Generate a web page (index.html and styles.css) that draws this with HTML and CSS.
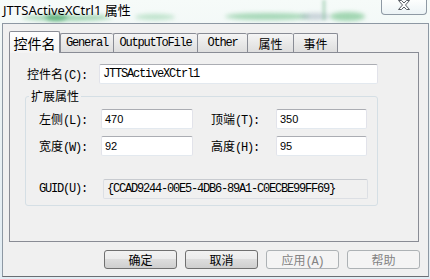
FILE: index.html
```html
<!DOCTYPE html>
<html lang="zh-CN">
  <head>
    <meta charset="UTF-8" />
    <title>JTTSActiveXCtrl1 属性</title>
    <link rel="stylesheet" href="styles.css">
  </head>
  <body>
    <div class="window">
      <div class="glass">
        <span class="blob b1"></span>
        <span class="blob b2"></span>
        <span class="blob b3"></span>
        <span class="blob b4"></span>
        <span class="blob b5"></span>
        <span class="blob b6"></span>
        <span class="stem"></span>
      </div>

      <div class="titlebar">
        <span class="title">JTTSActiveXCtrl1 属性</span>
        <button class="close" title="关闭">
          <svg width="12" height="10" viewBox="0 0 12 10">
            <polygon points="0.5,0.5 3.5,0.5 6,3 8.5,0.5 11.5,0.5 7.5,5 11.5,9.5 8.5,9.5 6,7 3.5,9.5 0.5,9.5 4.5,5"
              fill="#fdfdfd" stroke="#5a5f66" stroke-width="1" stroke-linejoin="round" />
          </svg>
        </button>
      </div>

      <div class="client">
        <div class="tabs">
          <div class="tab active">控件名</div>
          <div class="tab mono">General</div>
          <div class="tab mono">OutputToFile</div>
          <div class="tab mono">Other</div>
          <div class="tab">属性</div>
          <div class="tab">事件</div>
        </div>

        <div class="page">
          <div class="row name-row">
            <label>控件名<span class="mono">(C):</span></label>
            <div class="edit mono">JTTSActiveXCtrl1</div>
          </div>

          <fieldset class="group">
            <legend>扩展属性</legend>
            <div class="grid">
              <label>左侧<span class="mono">(L):</span></label>
              <div class="edit num">470</div>
              <label class="col2">顶端<span class="mono">(T):</span></label>
              <div class="edit num">350</div>

              <label>宽度<span class="mono">(W):</span></label>
              <div class="edit num">92</div>
              <label class="col2">高度<span class="mono">(H):</span></label>
              <div class="edit num">95</div>
            </div>

            <div class="row guid-row">
              <label class="mono">GUID(U):</label>
              <div class="edit mono readonly">{CCAD9244-00E5-4DB6-89A1-C0ECBE99FF69}</div>
            </div>
          </fieldset>
        </div>

        <div class="buttons">
          <button class="btn">确定</button>
          <button class="btn">取消</button>
          <button class="btn" disabled>应用<span class="mono">(A)</span></button>
          <button class="btn" disabled>帮助</button>
        </div>
      </div>
    </div>
  </body>
</html>
```

FILE: styles.css
```css
* {
  box-sizing: border-box;
}
body {
  margin: 0;
  width: 430px;
  height: 279px;
  overflow: hidden;
  font-family: "Noto Sans CJK SC", sans-serif;
  font-size: 12px;
  color: #000;
}
.window {
  position: relative;
  width: 430px;
  height: 279px;
  background: linear-gradient(#f6fbf9, #ecf3f4 30%, #e2ecf3);
  display: flex;
  flex-direction: column;
}

/* blurred desktop behind the glass title bar */
.glass {
  position: absolute;
  left: 0;
  top: 0;
  width: 430px;
  height: 23px;
  overflow: hidden;
}
.blob {
  position: absolute;
  border-radius: 50%;
  background: rgba(70, 175, 105, 0.45);
  filter: blur(2px);
}
.b1 { left: 22px; top: 14px; width: 90px; height: 7px; }
.b2 { left: 45px; top: 12px; width: 22px; height: 9px; background: rgba(40, 150, 80, 0.55); }
.b3 { left: 135px; top: 14px; width: 40px; height: 6px; background: rgba(90, 185, 120, 0.35); }
.b4 { left: 225px; top: 13px; width: 85px; height: 7px; }
.b5 { left: 300px; top: 13px; width: 30px; height: 7px; background: rgba(120, 140, 160, 0.35); }
.b6 { left: 330px; top: 12px; width: 35px; height: 9px; background: rgba(60, 170, 90, 0.45); }
.stem {
  position: absolute;
  left: 322px;
  top: 0;
  width: 4px;
  height: 20px;
  background: rgba(150, 200, 170, 0.5);
  filter: blur(1.5px);
}

.titlebar {
  position: relative;
  height: 23px;
  display: flex;
  justify-content: space-between;
  align-items: flex-start;
  padding: 0 2px 0 3px;
}
.title {
  font-family: "Noto Sans", "Noto Sans CJK SC", sans-serif;
  font-size: 13px;
  line-height: 18px;
  margin-top: 1px;
  text-shadow: 0 0 5px #fff, 0 0 3px #fff;
}
.close {
  width: 46px;
  height: 15px;
  margin-right: 1px;
  padding: 0;
  border: 1px solid #8e99a4;
  border-top: 0;
  border-radius: 0 0 4px 4px;
  background: linear-gradient(rgba(255, 255, 255, 0.75), rgba(232, 240, 244, 0.7));
  display: flex;
  justify-content: center;
  align-items: flex-start;
}
.close svg {
  display: block;
}

.client {
  height: 254px;
  margin: 0 1px 0 2px;
  padding: 7px 8px 7px 6px;
  background-color: #f0f0f0;
  border: 1px solid #8d98a3;
  border-bottom-color: #6a6e73;
  display: flex;
  flex-direction: column;
}

.mono {
  font-family: "Liberation Mono", monospace;
  font-size: 12px;
  letter-spacing: -1.2px;
}

/* tab strip */
.tabs {
  position: relative;
  z-index: 1;
  height: 21px;
  display: grid;
  grid-template-columns: 51px 53px 84px 50px 46px 45px;
}
.tab {
  margin-top: 2px;
  height: 19px;
  border: 1px solid #898c95;
  border-right: 0;
  border-bottom: 0;
  border-radius: 2px 2px 0 0;
  background: linear-gradient(#f5f5f5, #e9e9e9 50%, #dedede);
  display: flex;
  align-items: center;
  justify-content: center;
  white-space: nowrap;
}
.tab:last-child {
  border-right: 1px solid #898c95;
}
.tab.active {
  margin-top: 0;
  height: 22px;
  border-right: 1px solid #898c95;
  background: linear-gradient(#ffffff, #f3f3f3);
  font-size: 14px;
}

.page {
  flex: 1;
  margin-right: 1px;
  padding: 11px 0 0 15px;
  border: 1px solid #898c95;
}

.row {
  display: flex;
  align-items: center;
}
.name-row {
  padding-left: 2px;
}
.name-row label {
  width: 72px;
}
.name-row .edit {
  width: 279px;
}

.edit {
  height: 20px;
  padding: 0 3px;
  background-color: #fff;
  border: 1px solid;
  border-color: #abadb3 #e2e3ea #e3e9ef #e2e3ea;
  border-radius: 2px;
  display: flex;
  align-items: center;
  white-space: nowrap;
}
.num {
  font-family: "Liberation Sans", sans-serif;
  font-size: 11px;
}
.readonly {
  background-color: #f0f0f0;
  border-color: #c8cbd0 #dcdfe4 #dcdfe4 #dcdfe4;
}

.group {
  width: 353px;
  min-width: 0;
  margin: 5px 0 0;
  padding: 6px 0 6px 13px;
  border: 1px solid #d5dfe5;
  border-radius: 3px;
}
.group legend {
  margin-left: -10px;
  padding: 0 2px;
  line-height: 14px;
}

.grid {
  display: grid;
  grid-template-columns: 62px 92px 83px 91px;
  row-gap: 7px;
  align-items: center;
}
.grid .col2 {
  padding-left: 18px;
}

.guid-row {
  margin-top: 23px;
}
.guid-row label {
  width: 64px;
}
.guid-row .edit {
  width: 265px;
}

.buttons {
  height: 19px;
  margin-top: 8px;
  display: flex;
  justify-content: flex-end;
  gap: 8px;
}
.btn {
  width: 73px;
  height: 19px;
  padding: 0;
  border: 1px solid #707070;
  border-radius: 3px;
  background: linear-gradient(#f2f2f2, #ebebeb 50%, #dddddd 50%, #cfcfcf);
  font-family: "Noto Sans CJK SC", sans-serif;
  font-size: 12px;
  line-height: 17px;
  color: #000;
}
.btn:disabled {
  border-color: #adb2b5;
  background: #f4f4f4;
  color: #838383;
}
```
